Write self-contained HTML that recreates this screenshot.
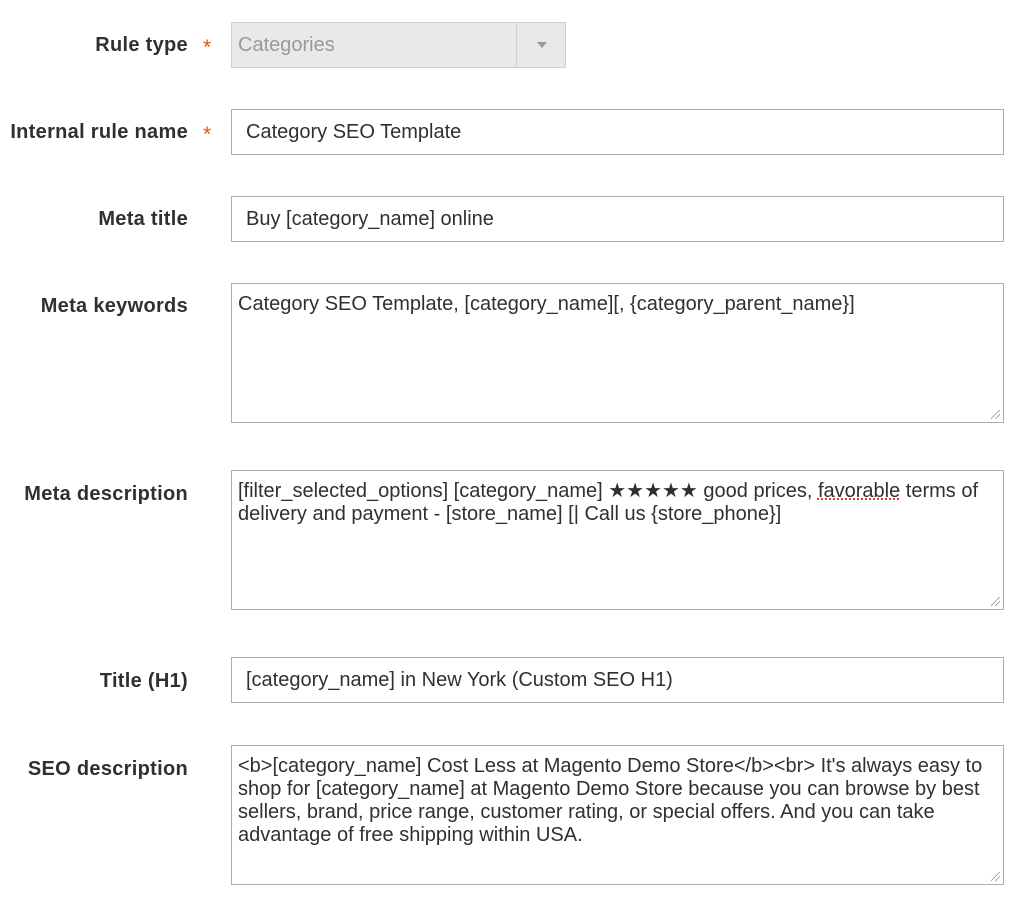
<!DOCTYPE html>
<html><head><meta charset="utf-8"><style>
body{margin:0;background:#fff;width:1024px;height:902px;position:relative;font-family:"Liberation Sans",sans-serif;color:#303030;overflow:hidden}
.l{position:absolute;right:836px;font-size:20px;font-weight:bold;letter-spacing:0.3px;color:#303030;white-space:nowrap;line-height:24px}
.s{position:absolute;left:203px;color:#eb5202;font-size:21px;line-height:24px}
.i{position:absolute;left:231px;width:771px;height:43px;border:1px solid #adadad;box-sizing:border-box;font-size:20px;line-height:43px;padding-left:14px;color:#303030;white-space:nowrap}
.t{position:absolute;left:231px;width:773px;border:1px solid #adadad;box-sizing:border-box;font-size:20px;line-height:23px;padding:9px 6px;color:#303030}
.g{position:absolute;right:3px;bottom:3px;width:9px;height:9px;background:linear-gradient(135deg,transparent 45%,#888 45%,#888 52%,transparent 52%,transparent 70%,#888 70%,#888 77%,transparent 77%)}
</style></head><body>
<div class="l" style="top:33px">Rule type</div><div class="s" style="top:36px">*</div>
<div class="i" style="top:22px;width:335px;height:46px;background:#e9e9e9;border-color:#cfcfcf;color:#9a9a9a;line-height:44px;padding-left:6px">Categories
<div style="position:absolute;left:284px;top:0;width:1px;height:44px;background:#cfcfcf"></div>
<div style="position:absolute;left:305px;top:19px;border-left:5px solid transparent;border-right:5px solid transparent;border-top:6px solid #9a9a9a"></div></div>
<div class="l" style="top:120px">Internal rule name</div><div class="s" style="top:123px">*</div>
<div class="i" style="top:109px;width:773px;height:46px;line-height:44px">Category SEO Template</div>
<div class="l" style="top:207px">Meta title</div>
<div class="i" style="top:196px;width:773px;height:46px;line-height:44px">Buy [category_name] online</div>
<div class="l" style="top:294px">Meta keywords</div>
<div class="t" style="top:283px;height:140px">Category SEO Template, [category_name][, {category_parent_name}]<div class="g"></div></div>
<div class="l" style="top:482px">Meta description</div>
<div class="t" style="top:470px;height:140px">[filter_selected_options] [category_name] ★★★★★ good prices, <span style="text-decoration:underline dotted #e33">favorable</span> terms of delivery and payment - [store_name] [| Call us {store_phone}]<div class="g"></div></div>
<div class="l" style="top:669px">Title (H1)</div>
<div class="i" style="top:657px;width:773px;height:46px;line-height:44px">[category_name] in New York (Custom SEO H1)</div>
<div class="l" style="top:757px">SEO description</div>
<div class="t" style="top:745px;height:140px">&lt;b&gt;[category_name] Cost Less at Magento Demo Store&lt;/b&gt;&lt;br&gt; It's always easy to shop for [category_name] at Magento Demo Store because you can browse by best sellers, brand, price range, customer rating, or special offers. And you can take advantage of free shipping within USA.<div class="g"></div></div>
</body></html>
